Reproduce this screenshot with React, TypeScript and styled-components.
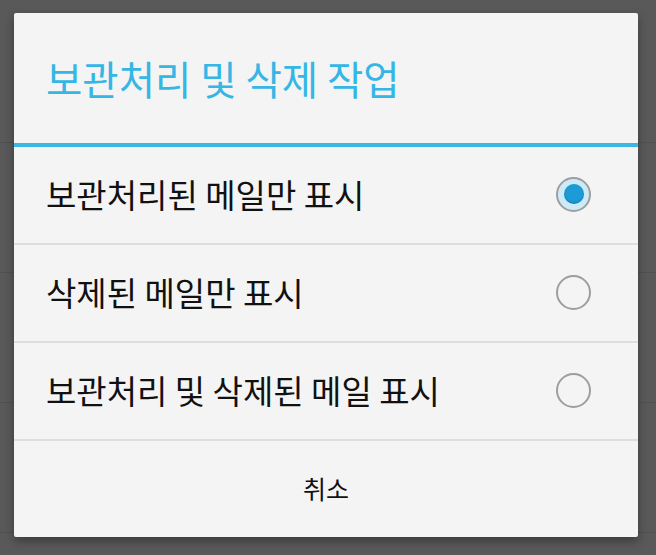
import React, { useState } from 'react';
import styled, { createGlobalStyle, css } from 'styled-components';

const GlobalStyle = createGlobalStyle`
  html, body {
    margin: 0;
    padding: 0;
    background: #595959;
  }
  * {
    box-sizing: border-box;
  }
`;

const options = ['보관처리된 메일만 표시', '삭제된 메일만 표시', '보관처리 및 삭제된 메일 표시'];

const App: React.FC = () => {
  const [selected, setSelected] = useState(0);

  return (
    <>
      <GlobalStyle />
      <Screen>
        <BackdropLines>
          <BackdropRow />
          <BackdropRow />
          <BackdropRow />
          <BackdropRow />
        </BackdropLines>
        <Dialog>
          <Title>보관처리 및 삭제 작업</Title>
          <TitleDivider />
          {options.map((label, index) => (
            <OptionRow key={label} onClick={() => setSelected(index)}>
              <OptionLabel>{label}</OptionLabel>
              <Radio checked={selected === index} />
            </OptionRow>
          ))}
          <CancelButton>취소</CancelButton>
        </Dialog>
      </Screen>
    </>
  );
};

const Screen = styled.div`
  position: relative;
  width: 656px;
  height: 555px;
  padding: 13px 18px 18px 14px;
  background: #595959;
  font-family: 'Noto Sans CJK KR', 'Noto Sans', sans-serif;
  overflow: hidden;
`;

const BackdropLines = styled.div`
  position: absolute;
  inset: 0;
  display: flex;
  flex-direction: column;
  padding-top: 13px;
`;

const BackdropRow = styled.div`
  height: 130px;
  border-bottom: 1px solid #515151;
`;

const Dialog = styled.div`
  position: relative;
  display: flex;
  flex-direction: column;
  width: 624px;
  height: 524px;
  background: #f4f4f4;
  border-radius: 2px;
  box-shadow: 0 4px 10px rgba(0, 0, 0, 0.35);
`;

const Title = styled.div`
  display: flex;
  align-items: center;
  height: 130px;
  padding: 0 0 2px 32px;
  font-size: 39.5px;
  color: #35b6e5;
`;

const TitleDivider = styled.div`
  height: 4px;
  background: #3cb6e3;
`;

const OptionRow = styled.div`
  display: flex;
  align-items: center;
  justify-content: space-between;
  height: 98px;
  padding: 0 47px 2px 32px;
  border-bottom: 2px solid #dedede;
  cursor: pointer;
`;

const OptionLabel = styled.span`
  font-size: 33px;
  color: #111;
`;

const Radio = styled.span<{ checked: boolean }>`
  position: relative;
  flex-shrink: 0;
  width: 35px;
  height: 35px;
  border-radius: 50%;
  border: 2.5px solid #9e9e9e;
  ${({ checked }) =>
    checked &&
    css`
      background: #cdebf7;
      &::after {
        content: '';
        position: absolute;
        left: 50%;
        top: 50%;
        width: 20px;
        height: 20px;
        margin: -10px 0 0 -10px;
        border-radius: 50%;
        background: #1c9bd6;
        box-shadow: inset 0 -1px 2px rgba(0, 60, 100, 0.35);
      }
    `}
`;

const CancelButton = styled.div`
  display: flex;
  align-items: center;
  justify-content: center;
  flex: 1;
  padding-bottom: 2px;
  font-size: 25px;
  color: #111;
`;

export default App;
